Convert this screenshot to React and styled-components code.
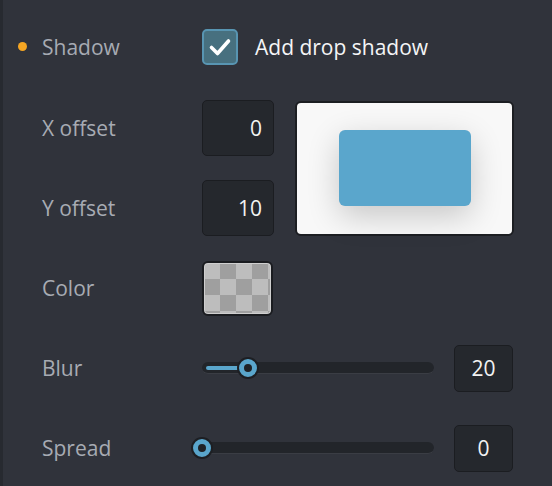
import React from "react"
import styled, {createGlobalStyle} from "styled-components"

const GlobalStyle = createGlobalStyle`
  html, body {
    margin: 0;
    padding: 0;
    background: #30333b;
  }
  body {
    font-family: "Open Sans", "Liberation Sans", sans-serif;
  }
`

const Panel = styled.div`
  width: 552px;
  height: 486px;
  box-sizing: border-box;
  border-left: 3px solid #272a30;
  background: #30333b;
  padding: 6px 0 0 39px;
  overflow: hidden;
`

const Row = styled.div`
  position: relative;
  display: grid;
  grid-template-columns: 160px 1fr;
  align-items: center;
  height: ${p => p.tall ? 82 : 80}px;
`

const OffsetGrid = styled.div`
  display: grid;
  grid-template-columns: 160px 72px 1fr;
  grid-template-rows: 80px 80px;
  align-items: center;
`

const Dot = styled.span`
  position: absolute;
  left: -24px;
  top: 50%;
  width: 9px;
  height: 9px;
  margin-top: -5px;
  border-radius: 50%;
  background: #f5a623;
`

const Label = styled.div`
  color: #a7abb3;
  font-size: 21px;
`

const CheckLabel = styled.label`
  display: flex;
  align-items: center;
  gap: 17px;
  color: #f4f5f6;
  font-size: 21px;
`

const CheckBox = styled.span`
  display: flex;
  align-items: center;
  justify-content: center;
  width: 36px;
  height: 36px;
  box-sizing: border-box;
  border: 2px solid #5895b2;
  border-radius: 5px;
  background: #47707f;
`

const NumBox = styled.div`
  box-sizing: border-box;
  width: ${p => p.w}px;
  height: ${p => p.h}px;
  display: flex;
  align-items: center;
  justify-content: ${p => p.center ? "center" : "flex-end"};
  padding-right: ${p => p.center ? 0 : 11}px;
  border: 1px solid #1b1d21;
  border-radius: 5px;
  background: #25282d;
  color: #f2f2f2;
  font-size: 21px;
`

const Preview = styled.div`
  grid-column: 3;
  grid-row: 1 / span 2;
  margin-left: 21px;
  width: 219px;
  height: 135px;
  box-sizing: border-box;
  border: 2px solid #1c1e22;
  border-radius: 6px;
  background: #f8f8f8;
  display: flex;
  align-items: center;
  justify-content: center;
`

const PreviewBox = styled.div`
  width: 132px;
  height: 76px;
  border-radius: 6px;
  background: #5aa6cc;
  box-shadow: 0 10px 32px rgba(0, 0, 0, 0.2);
`

const Swatch = styled.div`
  width: 71px;
  height: 55px;
  box-sizing: border-box;
  border: 2px solid #1a1c20;
  border-radius: 6px;
  box-shadow: inset 0 0 0 1px #cfcfcf;
  background-color: #bdbdbd;
  background-image:
    linear-gradient(45deg, #9f9f9f 25%, transparent 25%, transparent 75%, #9f9f9f 75%),
    linear-gradient(45deg, #9f9f9f 25%, transparent 25%, transparent 75%, #9f9f9f 75%);
  background-size: 32px 32px;
  background-position: 0 0, 16px 16px;
`

const SliderRow = styled.div`
  display: flex;
  align-items: center;
  gap: 20px;
`

const Track = styled.div`
  position: relative;
  width: 232px;
  height: 12px;
  box-sizing: border-box;
  border-radius: 6px;
  background: #22252a;
  border-bottom: 1px solid #3a3d44;
`

const Fill = styled.div`
  position: absolute;
  left: 4px;
  top: 4px;
  height: 4px;
  border-radius: 2px;
  background: #5aa6cc;
`

const Thumb = styled.div`
  position: absolute;
  top: 50%;
  width: 22px;
  height: 22px;
  margin: -11px 0 0 -11px;
  box-sizing: border-box;
  border: 2px solid #1d1f23;
  border-radius: 50%;
  background: #5aa6cc;
  display: flex;
  align-items: center;
  justify-content: center;

  &::after {
    content: "";
    width: 8px;
    height: 8px;
    border-radius: 50%;
    background: #1f2226;
  }
`

const Slider = ({value, max}) => {
  const pct = value / max
  return (
    <Track>
      {value > 0 && <Fill style={{width: pct * 232 - 4}} />}
      <Thumb style={{left: pct * 232}} />
    </Track>
  )
}

const App = () => {
  return (
    <Panel>
      <GlobalStyle />
      <Row tall>
        <Dot />
        <Label>Shadow</Label>
        <CheckLabel>
          <CheckBox>
            <svg width="26" height="26" viewBox="0 0 26 26">
              <path d="M4.5 13.5 L10.5 19.5 L21.5 7" fill="none" stroke="#fff" strokeWidth="3.6" strokeLinecap="round" strokeLinejoin="round" />
            </svg>
          </CheckBox>
          Add drop shadow
        </CheckLabel>
      </Row>
      <OffsetGrid>
        <Label>X offset</Label>
        <NumBox w={72} h={56}>0</NumBox>
        <Preview>
          <PreviewBox />
        </Preview>
        <Label>Y offset</Label>
        <NumBox w={72} h={56}>10</NumBox>
      </OffsetGrid>
      <Row>
        <Label>Color</Label>
        <Swatch />
      </Row>
      <Row>
        <Label>Blur</Label>
        <SliderRow>
          <Slider value={20} max={100} />
          <NumBox w={59} h={47} center>20</NumBox>
        </SliderRow>
      </Row>
      <Row>
        <Label>Spread</Label>
        <SliderRow>
          <Slider value={0} max={100} />
          <NumBox w={59} h={47} center>0</NumBox>
        </SliderRow>
      </Row>
    </Panel>
  )
}

export default App
